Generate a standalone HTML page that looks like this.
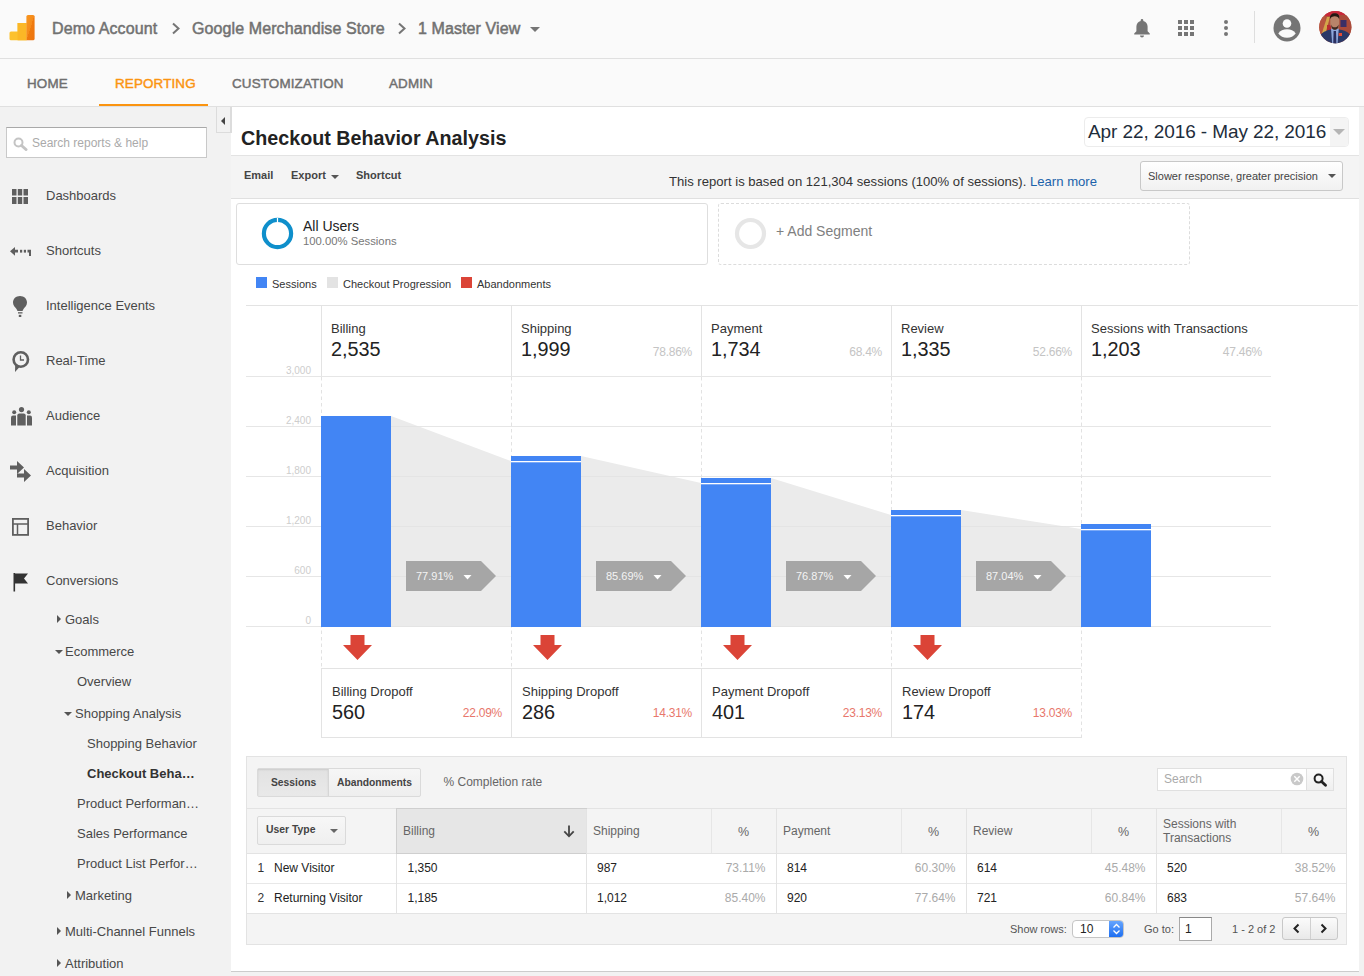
<!DOCTYPE html>
<html><head><meta charset="utf-8">
<style>
*{box-sizing:border-box;margin:0;padding:0}
html,body{width:1364px;height:976px;overflow:hidden;background:#f2f2f2;font-family:"Liberation Sans",sans-serif;color:#333}
.a{position:absolute;white-space:nowrap}
#top{position:absolute;left:0;top:0;width:1364px;height:59px;background:#fafafa;border-bottom:1px solid #e0e0e0}
#nav{position:absolute;left:0;top:59px;width:1364px;height:48px;background:#fafafa;border-bottom:1px solid #e0e0e0}
.crumb{font-size:16px;color:#717171;top:19.5px;letter-spacing:0.1px;-webkit-text-stroke:0.5px currentColor}
.tab{font-size:13.4px;color:#6f6f6f;top:75.5px;letter-spacing:0.15px;-webkit-text-stroke:0.45px currentColor}
#side{position:absolute;left:0;top:107px;width:231px;height:869px;background:#f2f2f2}
.mi{font-size:13px;color:#484848;left:46px}
.si{font-size:13px;color:#484848}
.tri-r{position:absolute;width:0;height:0;border-top:4px solid transparent;border-bottom:4px solid transparent;border-left:4px solid #555}
.tri-d{position:absolute;width:0;height:0;border-left:4px solid transparent;border-right:4px solid transparent;border-top:4px solid #555}
#main{position:absolute;left:231px;top:107px;width:1128px;height:865px;background:#fff;border-bottom:1px solid #ccc}
</style></head><body>
<div id="top">
  <svg class="a" style="left:9px;top:15px" width="26" height="26" viewBox="0 0 26 26">
    <defs><linearGradient id="lg1" x1="0" y1="0" x2="1" y2="1"><stop offset="0" stop-color="#f8961e"/><stop offset="0.5" stop-color="#f58a1a"/><stop offset="0.5" stop-color="#ef7a0e"/><stop offset="1" stop-color="#ed7410"/></linearGradient></defs>
    <path d="M2 16.5 L8.6 16.5 L8.6 8 L17.5 8 L17.5 25.3 L2 25.3 Q0.5 25.3 0.5 23.8 L0.5 18 Q0.5 16.5 2 16.5 Z" fill="#fcc12e"/>
    <rect x="8.6" y="8" width="8.9" height="17.3" fill="#fbb726"/>
    <path d="M17.4 1.5 Q17.4 0 19 0 L24 0 Q25.6 0 25.6 1.5 L25.6 23.8 Q25.6 25.3 24 25.3 L17.4 25.3 Z" fill="url(#lg1)"/>
  </svg>
  <div class="a crumb" style="left:52px">Demo Account</div>
  <svg class="a" style="left:171px;top:22px" width="10" height="13" viewBox="0 0 10 13"><path d="M2 1.5 L7.5 6.5 L2 11.5" stroke="#757575" stroke-width="2" fill="none"/></svg>
  <div class="a crumb" style="left:192px">Google Merchandise Store</div>
  <svg class="a" style="left:397px;top:22px" width="10" height="13" viewBox="0 0 10 13"><path d="M2 1.5 L7.5 6.5 L2 11.5" stroke="#757575" stroke-width="2" fill="none"/></svg>
  <div class="a crumb" style="left:418px">1 Master View</div>
  <div class="tri-d" style="left:530px;top:27px;border-left-width:5px;border-right-width:5px;border-top:5px solid #757575"></div>
  <svg class="a" style="left:1133px;top:18px" width="18" height="20" viewBox="0 0 18 20" fill="#757575"><path d="M9 1 C9.8 1 10.3 1.6 10.3 2.3 L10.3 2.9 C13 3.5 14.6 5.8 14.6 8.6 L14.6 13.2 L16.8 15.5 L16.8 16.6 L1.2 16.6 L1.2 15.5 L3.4 13.2 L3.4 8.6 C3.4 5.8 5 3.5 7.7 2.9 L7.7 2.3 C7.7 1.6 8.2 1 9 1 Z"/><path d="M7 17.6 L11 17.6 C11 18.8 10.1 19.6 9 19.6 C7.9 19.6 7 18.8 7 17.6 Z"/></svg>
  <svg class="a" style="left:1178px;top:20px" width="16" height="16" viewBox="0 0 16 16" fill="#757575" shape-rendering="crispEdges"><rect x="0" y="0" width="4" height="4"/><rect x="6" y="0" width="4" height="4"/><rect x="12" y="0" width="4" height="4"/><rect x="0" y="6" width="4" height="4"/><rect x="6" y="6" width="4" height="4"/><rect x="12" y="6" width="4" height="4"/><rect x="0" y="12" width="4" height="4"/><rect x="6" y="12" width="4" height="4"/><rect x="12" y="12" width="4" height="4"/></svg>
  <svg class="a" style="left:1224px;top:20px" width="4" height="16" viewBox="0 0 4 16" fill="#757575"><circle cx="2" cy="2" r="2"/><circle cx="2" cy="8" r="2"/><circle cx="2" cy="14" r="2"/></svg>
  <div class="a" style="left:1254px;top:11px;width:1px;height:32px;background:#dedede"></div>
  <svg class="a" style="left:1273px;top:14px" width="28" height="28" viewBox="0 0 28 28"><circle cx="14" cy="14" r="13.5" fill="#757575"/><circle cx="14" cy="9.5" r="4.3" fill="#fafafa"/><path d="M5.3 19.5 C7 16.3 10.5 15.2 14 15.2 C17.5 15.2 21 16.3 22.7 19.5 C20.8 22.2 17.6 23.8 14 23.8 C10.4 23.8 7.2 22.2 5.3 19.5 Z" fill="#fafafa"/></svg>
  <svg class="a" style="left:1318.5px;top:11px" width="33" height="33" viewBox="0 0 33 33"><defs><clipPath id="av"><circle cx="16.3" cy="16.2" r="16.1"/></clipPath></defs><g clip-path="url(#av)">
<rect width="33" height="33" fill="#b2503a"/>
<rect x="6" y="0" width="20" height="5" fill="#c8283a"/>
<rect x="0" y="6" width="6" height="18" fill="#b85540"/>
<path d="M3 22 L8 6 L11 6 L6 24 Z" fill="#d3a64a"/>
<rect x="20" y="4" width="13" height="20" fill="#a94a3a"/>
<rect x="21.5" y="9" width="6" height="7" fill="#3a2e66"/>
<rect x="8" y="14" width="4" height="8" fill="#b82b30"/>
<path d="M0 33 L1.5 24 C4 20.5 9 19 12 18.5 L20 18.5 C24 19 28.5 20.5 31 23.5 L33 33 Z" fill="#2b3867"/>
<path d="M12 17.5 L19.8 17.5 L18.5 33 L13.2 33 Z" fill="#8fa8dc"/>
<path d="M14.6 20 L17 20 L17.4 33 L14.2 33 Z" fill="#2a2f60"/>
<path d="M11.3 6.5 C11.3 4 13.5 2.6 15.8 2.6 C18.3 2.6 20.3 4 20.3 6.8 L20.3 12 C20.3 16 18.5 18.5 15.8 18.5 C13 18.5 11.3 16 11.3 12 Z" fill="#b8846a"/>
<path d="M10.9 8.5 C10.5 4 12.8 2.3 15.8 2.3 C19 2.3 21 4 20.2 8.5 C19.8 6 18 5.2 15.8 5.2 C13.6 5.2 11.5 6 10.9 8.5 Z" fill="#241712"/>
<path d="M12 13.5 C12.5 17.5 14 18.8 15.8 18.8 C17.8 18.8 19.3 17.5 19.7 13.5 C18.8 15.5 17.5 16.3 15.8 16.3 C14 16.3 12.8 15.5 12 13.5 Z" fill="#3d2a22"/>
<rect x="19.7" y="22" width="3.3" height="3" fill="#e84a32"/>
</g></svg>
</div>
<div id="nav"></div>
<div class="a tab" style="left:27px">HOME</div>
<div class="a tab" style="left:115px;color:#fb9410">REPORTING</div>
<div class="a tab" style="left:232px">CUSTOMIZATION</div>
<div class="a tab" style="left:389px">ADMIN</div>
<div class="a" style="left:99px;top:104px;width:109px;height:2px;background:#fb9410"></div>

<div id="side"></div>
<!-- collapse btn -->
<div class="a" style="left:216px;top:107px;width:15px;height:26px;background:#f2f2f2;border:1px solid #dcdcdc;border-top:none"></div>
<div class="a" style="left:221px;top:117px;width:0;height:0;border-top:4px solid transparent;border-bottom:4px solid transparent;border-right:4px solid #444"></div>
<!-- search -->
<div class="a" style="left:6px;top:127px;width:201px;height:31px;background:#fff;border:1px solid #c9c9c9;border-top-color:#a9a9a9"></div>
<svg class="a" style="left:13px;top:137px" width="15" height="14" viewBox="0 0 15 14"><circle cx="5.5" cy="5.5" r="4" stroke="#c4c4c4" stroke-width="2" fill="none"/><path d="M8.5 8.5 L13 12.5" stroke="#c4c4c4" stroke-width="3" stroke-linecap="round"/></svg>
<div class="a" style="left:32px;top:136px;font-size:12px;color:#aaa">Search reports &amp; help</div>
<!-- icons -->
<svg class="a" style="left:12px;top:189px" width="16" height="15" viewBox="0 0 16 15" fill="#5f5f5f"><rect x="0" y="0" width="4.5" height="6.5"/><rect x="5.8" y="0" width="4.4" height="6.5"/><rect x="11.5" y="0" width="4.5" height="6.5"/><rect x="0" y="8" width="4.5" height="7"/><rect x="5.8" y="8" width="4.4" height="7"/><rect x="11.5" y="8" width="4.5" height="7"/></svg>
<div class="a mi" style="top:188px">Dashboards</div>
<svg class="a" style="left:10px;top:247px" width="22" height="10" viewBox="0 0 22 10" fill="#5f5f5f"><path d="M0 4.3 L5 0 L5 2.8 L8 2.8 L8 5.6 L5 5.6 L5 8.8 Z"/><rect x="10" y="2.8" width="2.2" height="2.8"/><rect x="13.8" y="2.8" width="2.2" height="2.8"/><path d="M17.5 2.8 L21 2.8 L21 9 L19 9 L19 5.6 L17.5 5.6 Z"/></svg>
<div class="a mi" style="top:243px">Shortcuts</div>
<svg class="a" style="left:13px;top:296px" width="14" height="21" viewBox="0 0 14 21" fill="#5f5f5f"><path d="M7 0 C3 0 0 2.8 0 6.5 C0 9.5 2 11 3.5 13 L4.5 15 L9.5 15 L10.5 13 C12 11 14 9.5 14 6.5 C14 2.8 11 0 7 0 Z"/><rect x="5" y="16.2" width="4.5" height="1.3"/><rect x="5.8" y="18.8" width="2.5" height="2.2"/></svg>
<div class="a mi" style="top:298px">Intelligence Events</div>
<svg class="a" style="left:12px;top:351px" width="18" height="21" viewBox="0 0 18 21"><circle cx="8.8" cy="8.5" r="7.2" stroke="#5f5f5f" stroke-width="2.6" fill="none"/><path d="M8.5 4.5 L8.5 9 L12 9" stroke="#5f5f5f" stroke-width="1.3" fill="none"/><path d="M3.2 13 L3 21 L8 15.5 Z" fill="#5f5f5f"/></svg>
<div class="a mi" style="top:353px">Real-Time</div>
<svg class="a" style="left:11px;top:407px" width="21" height="19" viewBox="0 0 21 19" fill="#5f5f5f"><circle cx="10.5" cy="2.6" r="2.6"/><circle cx="3.2" cy="5.2" r="2"/><circle cx="17.8" cy="5.2" r="2"/><path d="M6.3 8.5 Q6.3 6.5 8.3 6.5 L12.7 6.5 Q14.7 6.5 14.7 8.5 L14.7 18.5 L6.3 18.5 Z"/><path d="M0 10.5 Q0 8.5 2 8.5 L5 8.5 L5 18.5 L0 18.5 Z"/><path d="M16 8.5 L19 8.5 Q21 8.5 21 10.5 L21 18.5 L16 18.5 Z"/></svg>
<div class="a mi" style="top:408px">Audience</div>
<svg class="a" style="left:10px;top:461px" width="21" height="21" viewBox="0 0 21 21" fill="#5f5f5f"><path d="M0 4.5 L7 4.5 L7 0 L14 6.5 L7 13 L7 8.5 L0 8.5 Z"/><path d="M7 12.5 L14 12.5 L14 8 L21 14.5 L14 21 L14 16.5 L7 16.5 Z"/></svg>
<div class="a mi" style="top:463px">Acquisition</div>
<svg class="a" style="left:12px;top:518px" width="17" height="18" viewBox="0 0 17 18"><rect x="0.9" y="0.9" width="15.2" height="16" stroke="#5f5f5f" stroke-width="1.8" fill="none"/><path d="M1 6 L16 6 M5.5 6 L5.5 17" stroke="#5f5f5f" stroke-width="1.5"/></svg>
<div class="a mi" style="top:518px">Behavior</div>
<svg class="a" style="left:13px;top:573px" width="16" height="19" viewBox="0 0 16 19" fill="#333"><rect x="0.5" y="0" width="1.6" height="18.5"/><path d="M2 0.5 L15 0.5 L11 5.5 L15 10.5 L2 10.5 Z"/></svg>
<div class="a mi" style="top:573px">Conversions</div>
<div class="tri-r" style="left:57px;top:615px"></div>
<div class="a si" style="left:65px;top:612px">Goals</div>
<div class="tri-d" style="left:55px;top:650px"></div>
<div class="a si" style="left:65px;top:644px">Ecommerce</div>
<div class="a si" style="left:77px;top:674px">Overview</div>
<div class="tri-d" style="left:64px;top:712px"></div>
<div class="a si" style="left:75px;top:706px">Shopping Analysis</div>
<div class="a si" style="left:87px;top:736px">Shopping Behavior</div>
<div class="a si" style="left:87px;top:766px;font-weight:bold;color:#333">Checkout Beha&hellip;</div>
<div class="a si" style="left:77px;top:796px">Product Performan&hellip;</div>
<div class="a si" style="left:77px;top:826px">Sales Performance</div>
<div class="a si" style="left:77px;top:856px">Product List Perfor&hellip;</div>
<div class="tri-r" style="left:67px;top:891px"></div>
<div class="a si" style="left:75px;top:888px">Marketing</div>
<div class="tri-r" style="left:57px;top:927px"></div>
<div class="a si" style="left:65px;top:924px">Multi-Channel Funnels</div>
<div class="tri-r" style="left:57px;top:959px"></div>
<div class="a si" style="left:65px;top:956px">Attribution</div>

<div id="main"></div>
<div class="a" style="left:231px;top:107px;width:1px;height:26px;background:#dcdcdc"></div>
<div class="a" style="left:241px;top:127px;font-size:19.72px;font-weight:bold;color:#222">Checkout Behavior Analysis</div>
<!-- date picker -->
<div class="a" style="left:1084px;top:117px;width:265px;height:30px;border:1px solid #ececec;border-radius:4px;background:#fff;overflow:hidden">
  <div class="a" style="left:245px;top:0;width:19px;height:28px;background:#f4f4f4"></div>
</div>
<div class="a" style="left:1088px;top:121px;font-size:19px;color:#1e2d3b;letter-spacing:-0.1px">Apr 22, 2016 - May 22, 2016</div>
<div class="a" style="left:1333px;top:129px;width:0;height:0;border-left:6px solid transparent;border-right:6px solid transparent;border-top:6px solid #b5b5b5"></div>
<!-- toolbar -->
<div class="a" style="left:231px;top:155px;width:1128px;height:44px;background:#f4f4f4;border-top:1px solid #e3e3e3;border-bottom:1px solid #e0e0e0"></div>
<div class="a" style="left:244px;top:169px;font-size:11px;font-weight:bold;color:#444">Email</div>
<div class="a" style="left:291px;top:169px;font-size:11px;font-weight:bold;color:#444">Export</div>
<div class="tri-d" style="left:331px;top:175px;border-left-width:4px;border-right-width:4px;border-top:4px solid #555"></div>
<div class="a" style="left:356px;top:169px;font-size:11px;font-weight:bold;color:#444">Shortcut</div>
<div class="a" style="left:669px;top:174px;font-size:13.1px;color:#333">This report is based on 121,304 sessions (100% of sessions). <span style="color:#1b62aa">Learn more</span></div>
<div class="a" style="left:1140px;top:161px;width:203px;height:30px;border:1px solid #c8c8c8;border-radius:3px;background:linear-gradient(#fff,#f1f1f1)"></div>
<div class="a" style="left:1148px;top:170px;font-size:11px;color:#444">Slower response, greater precision</div>
<div class="tri-d" style="left:1327.5px;top:174px;border-left-width:4px;border-right-width:4px;border-top:4px solid #555"></div>
<!-- segments -->
<div class="a" style="left:236px;top:203px;width:472px;height:62px;border:1px solid #dedede;border-radius:3px;background:#fff"></div>
<svg class="a" style="left:261px;top:217px" width="33" height="33" viewBox="0 0 33 33"><circle cx="16.5" cy="16.5" r="13.6" stroke="#0f8fcb" stroke-width="4.2" fill="none"/><rect x="15.9" y="1" width="1.2" height="5" fill="#fff"/></svg>
<div class="a" style="left:303px;top:218px;font-size:14px;color:#222">All Users</div>
<div class="a" style="left:303px;top:235px;font-size:11.3px;color:#777">100.00% Sessions</div>
<div class="a" style="left:718px;top:203px;width:472px;height:62px;border:1px dashed #dcdcdc;border-radius:3px;background:#fff"></div>
<svg class="a" style="left:734px;top:217px" width="33" height="33" viewBox="0 0 33 33"><circle cx="16.5" cy="16.5" r="13.5" stroke="#e6e6e6" stroke-width="4.2" fill="none"/></svg>
<div class="a" style="left:776px;top:223px;font-size:14px;color:#808080">+ Add Segment</div>
<!-- legend -->
<div class="a" style="left:256px;top:277px;width:11px;height:11px;background:#4285f4"></div>
<div class="a" style="left:272px;top:278px;font-size:11px;color:#333">Sessions</div>
<div class="a" style="left:327px;top:277px;width:11px;height:11px;background:#e3e3e3"></div>
<div class="a" style="left:343px;top:278px;font-size:11px;color:#333">Checkout Progression</div>
<div class="a" style="left:461px;top:277px;width:11px;height:11px;background:#db4437"></div>
<div class="a" style="left:477px;top:278px;font-size:11px;color:#333">Abandonments</div>

<!-- chart -->
<svg class="a" style="left:0;top:0" width="1364" height="976" viewBox="0 0 1364 976">
<rect x="246" y="305" width="1112" height="1" fill="#e3e3e3"/>
<rect x="321" y="305" width="1" height="71" fill="#e3e3e3"/>
<rect x="511" y="305" width="1" height="71" fill="#e3e3e3"/>
<rect x="701" y="305" width="1" height="71" fill="#e3e3e3"/>
<rect x="891" y="305" width="1" height="71" fill="#e3e3e3"/>
<rect x="1081" y="305" width="1" height="71" fill="#e3e3e3"/>
<polygon points="391,416 511,461 511,627 391,627" fill="#ebebeb"/>
<polygon points="581,456 701,483 701,627 581,627" fill="#ebebeb"/>
<polygon points="771,478 891,515 891,627 771,627" fill="#ebebeb"/>
<polygon points="961,510 1081,529 1081,627 961,627" fill="#ebebeb"/>
<rect x="246" y="376" width="1025" height="1" fill="#e3e3e3" opacity="0.9"/>
<rect x="246" y="426" width="1025" height="1" fill="#e3e3e3" opacity="0.9"/>
<rect x="246" y="476" width="1025" height="1" fill="#e3e3e3" opacity="0.9"/>
<rect x="246" y="526" width="1025" height="1" fill="#e3e3e3" opacity="0.9"/>
<rect x="246" y="576" width="1025" height="1" fill="#e3e3e3" opacity="0.9"/>
<rect x="246" y="626" width="1025" height="1" fill="#e3e3e3" opacity="0.9"/>
<line x1="321.5" y1="377" x2="321.5" y2="668" stroke="#e2e2e2" stroke-width="1" stroke-dasharray="3.5 3"/>
<line x1="511.5" y1="377" x2="511.5" y2="668" stroke="#e2e2e2" stroke-width="1" stroke-dasharray="3.5 3"/>
<line x1="701.5" y1="377" x2="701.5" y2="668" stroke="#e2e2e2" stroke-width="1" stroke-dasharray="3.5 3"/>
<line x1="891.5" y1="377" x2="891.5" y2="668" stroke="#e2e2e2" stroke-width="1" stroke-dasharray="3.5 3"/>
<line x1="1081.5" y1="377" x2="1081.5" y2="738" stroke="#e2e2e2" stroke-width="1" stroke-dasharray="3.5 3"/>
<rect x="321" y="416" width="70" height="211" fill="#4285f4"/>
<rect x="511" y="456" width="70" height="171" fill="#4285f4"/>
<rect x="511" y="461" width="70" height="1.3" fill="#fff"/>
<rect x="701" y="478" width="70" height="149" fill="#4285f4"/>
<rect x="701" y="483" width="70" height="1.3" fill="#fff"/>
<rect x="891" y="510" width="70" height="117" fill="#4285f4"/>
<rect x="891" y="515" width="70" height="1.3" fill="#fff"/>
<rect x="1081" y="524" width="70" height="103" fill="#4285f4"/>
<rect x="1081" y="529" width="70" height="1.3" fill="#fff"/>
<polygon points="406,561 481,561 496,576 481,591 406,591" fill="#a6a6a6"/>
<polygon points="463.5,575 471.5,575 467.5,579.5" fill="#fff"/>
<polygon points="596,561 671,561 686,576 671,591 596,591" fill="#a6a6a6"/>
<polygon points="653.5,575 661.5,575 657.5,579.5" fill="#fff"/>
<polygon points="786,561 861,561 876,576 861,591 786,591" fill="#a6a6a6"/>
<polygon points="843.5,575 851.5,575 847.5,579.5" fill="#fff"/>
<polygon points="976,561 1051,561 1066,576 1051,591 976,591" fill="#a6a6a6"/>
<polygon points="1033.5,575 1041.5,575 1037.5,579.5" fill="#fff"/>
<polygon points="350.5,635 364.5,635 364.5,645 372,645 357.5,660 343,645 350.5,645" fill="#db4437"/>
<polygon points="540.5,635 554.5,635 554.5,645 562,645 547.5,660 533,645 540.5,645" fill="#db4437"/>
<polygon points="730.5,635 744.5,635 744.5,645 752,645 737.5,660 723,645 730.5,645" fill="#db4437"/>
<polygon points="920.5,635 934.5,635 934.5,645 942,645 927.5,660 913,645 920.5,645" fill="#db4437"/>
<rect x="321" y="668" width="760" height="1" fill="#e3e3e3"/>
<rect x="321" y="737" width="760" height="1" fill="#e3e3e3"/>
<rect x="321" y="668" width="1" height="70" fill="#e3e3e3"/>
<rect x="511" y="668" width="1" height="70" fill="#e3e3e3"/>
<rect x="701" y="668" width="1" height="70" fill="#e3e3e3"/>
<rect x="891" y="668" width="1" height="70" fill="#e3e3e3"/>

</svg>
<div class="a" style="left:331px;top:321px;font-size:13px;color:#333">Billing</div>
<div class="a" style="left:331px;top:338px;font-size:19.85px;color:#222">2,535</div>
<div class="a" style="left:521px;top:321px;font-size:13px;color:#333">Shipping</div>
<div class="a" style="left:521px;top:338px;font-size:19.85px;color:#222">1,999</div>
<div class="a" style="right:672px;top:344.5px;font-size:12px;letter-spacing:-0.25px;color:#c4c4c4">78.86%</div>
<div class="a" style="left:711px;top:321px;font-size:13px;color:#333">Payment</div>
<div class="a" style="left:711px;top:338px;font-size:19.85px;color:#222">1,734</div>
<div class="a" style="right:482px;top:344.5px;font-size:12px;letter-spacing:-0.25px;color:#c4c4c4">68.4%</div>
<div class="a" style="left:901px;top:321px;font-size:13px;color:#333">Review</div>
<div class="a" style="left:901px;top:338px;font-size:19.85px;color:#222">1,335</div>
<div class="a" style="right:292px;top:344.5px;font-size:12px;letter-spacing:-0.25px;color:#c4c4c4">52.66%</div>
<div class="a" style="left:1091px;top:321px;font-size:13px;color:#333">Sessions with Transactions</div>
<div class="a" style="left:1091px;top:338px;font-size:19.85px;color:#222">1,203</div>
<div class="a" style="right:102px;top:344.5px;font-size:12px;letter-spacing:-0.25px;color:#c4c4c4">47.46%</div>
<div class="a" style="right:1053px;top:364.8px;font-size:10px;color:#cdcdcd">3,000</div>
<div class="a" style="right:1053px;top:414.8px;font-size:10px;color:#cdcdcd">2,400</div>
<div class="a" style="right:1053px;top:464.8px;font-size:10px;color:#cdcdcd">1,800</div>
<div class="a" style="right:1053px;top:514.8px;font-size:10px;color:#cdcdcd">1,200</div>
<div class="a" style="right:1053px;top:564.8px;font-size:10px;color:#cdcdcd">600</div>
<div class="a" style="right:1053px;top:614.8px;font-size:10px;color:#cdcdcd">0</div>
<div class="a" style="left:416px;top:570.3px;font-size:11px;color:#f4f4f4">77.91%</div>
<div class="a" style="left:606px;top:570.3px;font-size:11px;color:#f4f4f4">85.69%</div>
<div class="a" style="left:796px;top:570.3px;font-size:11px;color:#f4f4f4">76.87%</div>
<div class="a" style="left:986px;top:570.3px;font-size:11px;color:#f4f4f4">87.04%</div>
<div class="a" style="left:332px;top:684.3px;font-size:13px;color:#333">Billing Dropoff</div>
<div class="a" style="left:332px;top:701.3px;font-size:19.85px;color:#222">560</div>
<div class="a" style="right:862px;top:706px;font-size:12px;letter-spacing:-0.25px;color:#e8776c">22.09%</div>
<div class="a" style="left:522px;top:684.3px;font-size:13px;color:#333">Shipping Dropoff</div>
<div class="a" style="left:522px;top:701.3px;font-size:19.85px;color:#222">286</div>
<div class="a" style="right:672px;top:706px;font-size:12px;letter-spacing:-0.25px;color:#e8776c">14.31%</div>
<div class="a" style="left:712px;top:684.3px;font-size:13px;color:#333">Payment Dropoff</div>
<div class="a" style="left:712px;top:701.3px;font-size:19.85px;color:#222">401</div>
<div class="a" style="right:482px;top:706px;font-size:12px;letter-spacing:-0.25px;color:#e8776c">23.13%</div>
<div class="a" style="left:902px;top:684.3px;font-size:13px;color:#333">Review Dropoff</div>
<div class="a" style="left:902px;top:701.3px;font-size:19.85px;color:#222">174</div>
<div class="a" style="right:292px;top:706px;font-size:12px;letter-spacing:-0.25px;color:#e8776c">13.03%</div>
<!-- table -->
<div class="a" style="left:246px;top:756px;width:1101px;height:189px;background:#f4f4f4;border:1px solid #e3e3e3"></div>
<div class="a" style="left:257px;top:768px;width:164px;height:29px;border:1px solid #dadada;border-radius:2px;background:linear-gradient(#f6f6f6,#eeeeee)"></div>
<div class="a" style="left:258px;top:769px;width:71px;height:27px;background:linear-gradient(#e2e2e2,#e9e9e9);box-shadow:inset 0 1px 2px rgba(0,0,0,0.1);border-right:1px solid #d6d6d6"></div>
<div class="a" style="left:271px;top:777px;font-size:10.3px;font-weight:bold;color:#444">Sessions</div>
<div class="a" style="left:337px;top:777px;font-size:10.3px;font-weight:bold;color:#444">Abandonments</div>
<div class="a" style="left:443.5px;top:775px;font-size:12px;color:#666">% Completion rate</div>
<div class="a" style="left:1157px;top:768px;width:150px;height:23px;background:#fff;border:1px solid #e0e0e0;border-right:none"></div>
<div class="a" style="left:1164px;top:772px;font-size:12px;color:#aaa">Search</div>
<svg class="a" style="left:1290px;top:772px" width="14" height="14" viewBox="0 0 14 14"><circle cx="7" cy="7" r="6.3" fill="#c9c9c9"/><path d="M4.3 4.3 L9.7 9.7 M9.7 4.3 L4.3 9.7" stroke="#fff" stroke-width="1.4"/></svg>
<div class="a" style="left:1306px;top:768px;width:28px;height:23px;background:linear-gradient(#fafafa,#efefef);border:1px solid #e0e0e0"></div>
<svg class="a" style="left:1313px;top:773px" width="15" height="14" viewBox="0 0 15 14"><circle cx="5.6" cy="5.6" r="4" stroke="#222" stroke-width="2" fill="none"/><path d="M8.5 8.5 L12.5 12.3" stroke="#222" stroke-width="2.8" stroke-linecap="round"/></svg>
<div class="a" style="left:247px;top:808px;width:1099px;height:1px;background:#e3e3e3"></div>
<div class="a" style="left:247px;top:853px;width:1099px;height:1px;background:#e3e3e3"></div>
<div class="a" style="left:257px;top:816px;width:89px;height:29px;border:1px solid #dadada;border-radius:2px;background:linear-gradient(#f7f7f7,#efefef)"></div>
<div class="a" style="left:266px;top:823.5px;font-size:10.4px;font-weight:bold;color:#444">User Type</div>
<div class="tri-d" style="left:329.5px;top:829px;border-left-width:4px;border-right-width:4px;border-top:4px solid #666"></div>
<div class="a" style="left:396px;top:808px;width:191px;height:46px;background:#e6e6e6;border:1px solid #cfcfcf"></div>
<div class="a" style="left:403px;top:824px;font-size:12px;color:#666">Billing</div>
<svg class="a" style="left:563px;top:825px" width="12" height="13" viewBox="0 0 12 13"><path d="M6 0.5 L6 11" stroke="#444" stroke-width="1.8"/><path d="M1.3 6.3 L6 11.3 L10.7 6.3" stroke="#444" stroke-width="1.8" fill="none"/></svg>
<div class="a" style="left:247px;top:854px;width:1099px;height:59px;background:#fff"></div>
<div class="a" style="left:247px;top:883px;width:1099px;height:1px;background:#e8e8e8"></div>
<div class="a" style="left:247px;top:913px;width:1099px;height:1px;background:#e3e3e3"></div>
<div class="a" style="left:586px;top:809px;width:1px;height:104px;background:#e3e3e3"></div>
<div class="a" style="left:711px;top:809px;width:1px;height:44px;background:#e6e6e6"></div>
<div class="a" style="left:593px;top:824px;font-size:12px;color:#666">Shipping</div>
<div class="a" style="left:738px;top:824.5px;font-size:12.5px;color:#666">%</div>
<div class="a" style="left:776px;top:809px;width:1px;height:104px;background:#e3e3e3"></div>
<div class="a" style="left:901px;top:809px;width:1px;height:44px;background:#e6e6e6"></div>
<div class="a" style="left:783px;top:824px;font-size:12px;color:#666">Payment</div>
<div class="a" style="left:928px;top:824.5px;font-size:12.5px;color:#666">%</div>
<div class="a" style="left:966px;top:809px;width:1px;height:104px;background:#e3e3e3"></div>
<div class="a" style="left:1091px;top:809px;width:1px;height:44px;background:#e6e6e6"></div>
<div class="a" style="left:973px;top:824px;font-size:12px;color:#666">Review</div>
<div class="a" style="left:1118px;top:824.5px;font-size:12.5px;color:#666">%</div>
<div class="a" style="left:1156px;top:809px;width:1px;height:104px;background:#e3e3e3"></div>
<div class="a" style="left:1281px;top:809px;width:1px;height:44px;background:#e6e6e6"></div>
<div class="a" style="left:1163px;top:818px;font-size:12px;line-height:13.5px;color:#666;white-space:normal;width:110px">Sessions with<br>Transactions</div>
<div class="a" style="left:1308px;top:824.5px;font-size:12.5px;color:#666">%</div>
<div class="a" style="left:396px;top:854px;width:1px;height:59px;background:#e3e3e3"></div>
<div class="a" style="left:257.5px;top:861px;font-size:12px;color:#333">1</div>
<div class="a" style="left:274px;top:861px;font-size:12px;color:#222">New Visitor</div>
<div class="a" style="left:407.5px;top:861px;font-size:12px;color:#222">1,350</div>
<div class="a" style="left:597px;top:861px;font-size:12px;color:#222">987</div>
<div class="a" style="right:598.5px;top:861px;font-size:12px;color:#aaa">73.11%</div>
<div class="a" style="left:787px;top:861px;font-size:12px;color:#222">814</div>
<div class="a" style="right:408.5px;top:861px;font-size:12px;color:#aaa">60.30%</div>
<div class="a" style="left:977px;top:861px;font-size:12px;color:#222">614</div>
<div class="a" style="right:218.5px;top:861px;font-size:12px;color:#aaa">45.48%</div>
<div class="a" style="left:1167px;top:861px;font-size:12px;color:#222">520</div>
<div class="a" style="right:28.5px;top:861px;font-size:12px;color:#aaa">38.52%</div>
<div class="a" style="left:257.5px;top:891px;font-size:12px;color:#333">2</div>
<div class="a" style="left:274px;top:891px;font-size:12px;color:#222">Returning Visitor</div>
<div class="a" style="left:407.5px;top:891px;font-size:12px;color:#222">1,185</div>
<div class="a" style="left:597px;top:891px;font-size:12px;color:#222">1,012</div>
<div class="a" style="right:598.5px;top:891px;font-size:12px;color:#aaa">85.40%</div>
<div class="a" style="left:787px;top:891px;font-size:12px;color:#222">920</div>
<div class="a" style="right:408.5px;top:891px;font-size:12px;color:#aaa">77.64%</div>
<div class="a" style="left:977px;top:891px;font-size:12px;color:#222">721</div>
<div class="a" style="right:218.5px;top:891px;font-size:12px;color:#aaa">60.84%</div>
<div class="a" style="left:1167px;top:891px;font-size:12px;color:#222">683</div>
<div class="a" style="right:28.5px;top:891px;font-size:12px;color:#aaa">57.64%</div>
<div class="a" style="left:1010px;top:923px;font-size:11px;color:#555">Show rows:</div>
<div class="a" style="left:1072px;top:920px;width:52px;height:18px;border:1px solid #c5c5c5;border-radius:4px;background:#fff;overflow:hidden"><div class="a" style="left:36px;top:-1px;width:15px;height:18px;background:linear-gradient(#6aa8ff,#1a6cf0)"></div></div>
<svg class="a" style="left:1112px;top:923px" width="9" height="12" viewBox="0 0 9 12"><path d="M1.5 4.5 L4.5 1.5 L7.5 4.5 M1.5 7.5 L4.5 10.5 L7.5 7.5" stroke="#fff" stroke-width="1.3" fill="none"/></svg>
<div class="a" style="left:1080px;top:922px;font-size:12px;color:#222">10</div>
<div class="a" style="left:1144px;top:923px;font-size:11px;color:#555">Go to:</div>
<div class="a" style="left:1179px;top:917px;width:33px;height:24px;border:1px solid #aaa;border-top-color:#888;background:#fff"></div>
<div class="a" style="left:1185px;top:922px;font-size:12px;color:#222">1</div>
<div class="a" style="left:1232px;top:923px;font-size:11px;color:#555">1 - 2 of 2</div>
<div class="a" style="left:1282px;top:917px;width:56px;height:23px;border:1px solid #c8c8c8;border-radius:3px;background:linear-gradient(#fbfbfb,#e9e9e9)"></div>
<div class="a" style="left:1310px;top:918px;width:1px;height:21px;background:#d0d0d0"></div>
<svg class="a" style="left:1292px;top:923px" width="9" height="11" viewBox="0 0 9 11"><path d="M6.5 1.5 L2.5 5.5 L6.5 9.5" stroke="#222" stroke-width="2" fill="none"/></svg>
<svg class="a" style="left:1319px;top:923px" width="9" height="11" viewBox="0 0 9 11"><path d="M2.5 1.5 L6.5 5.5 L2.5 9.5" stroke="#222" stroke-width="2" fill="none"/></svg>
</body></html>
